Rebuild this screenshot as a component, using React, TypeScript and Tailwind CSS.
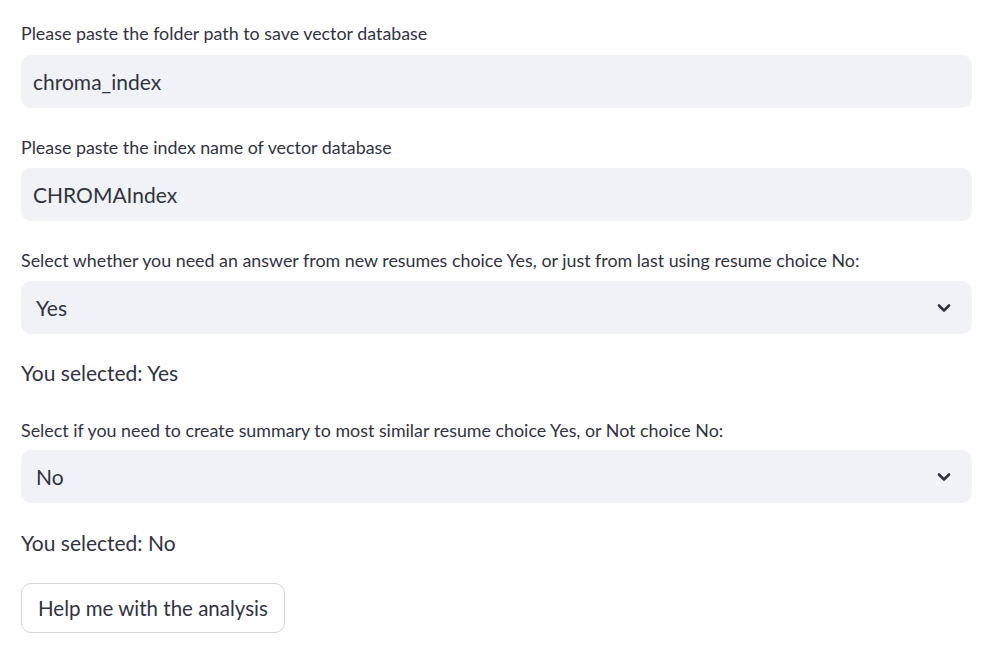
import React from "react";

const font = { fontFamily: '"Source Sans Pro", Lato, "Noto Sans", sans-serif' };

function Chevron() {
  return (
    <svg width="14" height="10" viewBox="0 0 14 10" className="shrink-0">
      <polyline points="2,2.5 7,7.5 12,2.5" fill="none" stroke="#31333f" strokeWidth="2.6" strokeLinecap="round" strokeLinejoin="round" />
    </svg>
  );
}

function Label({ children, className = "" }: { children: React.ReactNode; className?: string }) {
  return <div className={"h-6 leading-6 text-[17.85px] text-[#31333f] " + className}>{children}</div>;
}

function Input({ value, className = "" }: { value: string; className?: string }) {
  return (
    <div className={"h-[53px] rounded-[10px] bg-[#f0f2f6] flex items-center pl-3 text-[21px] text-[#31333f] " + className}>
      {value}
    </div>
  );
}

function Select({ value, className = "" }: { value: string; className?: string }) {
  return (
    <div className={"h-[53px] rounded-[10px] bg-[#f0f2f6] flex items-center justify-between pl-[15px] pr-[21px] text-[21px] text-[#31333f] " + className}>
      <span>{value}</span>
      <Chevron />
    </div>
  );
}

export default function App() {
  return (
    <div className="w-[1006px] h-[656px] bg-white overflow-hidden" style={font}>
      <div className="w-[951px] ml-[21px] pt-[21px] flex flex-col">
        <Label>Please paste the folder path to save vector database</Label>
        <Input value="chroma_index" className="mt-[10px]" />
        <Label className="mt-[27px]">Please paste the index name of vector database</Label>
        <Input value="CHROMAIndex" className="mt-[9px]" />
        <Label className="mt-[27px]">Select whether you need an answer from new resumes choice Yes, or just from last using resume choice No:</Label>
        <Select value="Yes" className="mt-[9px]" />
        <div className="mt-[24px] h-[30px] leading-[30px] text-[21px] text-[#31333f]">You selected: Yes</div>
        <Label className="mt-[30px]">Select if you need to create summary to most similar resume choice Yes, or Not choice No:</Label>
        <Select value="No" className="mt-[8px]" />
        <div className="mt-[25px] h-[30px] leading-[30px] text-[21px] text-[#31333f]">You selected: No</div>
        <div className="mt-[25px]">
          <button className="h-[50px] px-[16px] rounded-[10px] border border-[#d5d6d9] bg-white text-[20.5px] text-[#31333f]" style={font}>
            Help me with the analysis
          </button>
        </div>
      </div>
    </div>
  );
}
